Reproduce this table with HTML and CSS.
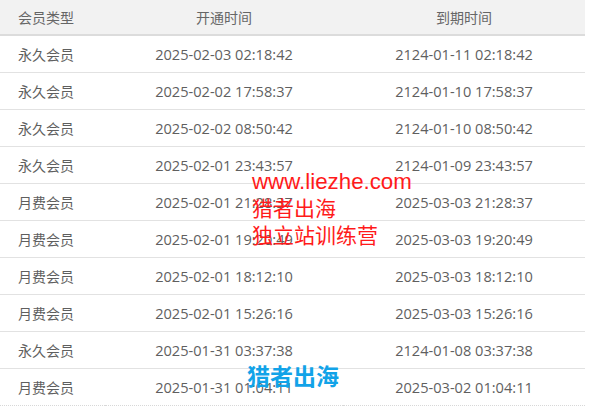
FILE: index.html
```html
<!DOCTYPE html>
<html>
<head>
  <meta charset="utf-8">
  <title>会员记录</title>
  <link rel="stylesheet" href="styles.css">
</head>

<body>
  <div class="wrap">
    <table class="vip-table">
      <colgroup>
        <col class="col-type">
        <col class="col-start">
        <col class="col-end">
      </colgroup>
      <thead>
        <tr>
          <th class="left">会员类型</th>
          <th>开通时间</th>
          <th>到期时间</th>
        </tr>
      </thead>
      <tbody>
        <tr><td class="left">永久会员</td><td>2025-02-03 02:18:42</td><td>2124-01-11 02:18:42</td></tr>
        <tr><td class="left">永久会员</td><td>2025-02-02 17:58:37</td><td>2124-01-10 17:58:37</td></tr>
        <tr><td class="left">永久会员</td><td>2025-02-02 08:50:42</td><td>2124-01-10 08:50:42</td></tr>
        <tr><td class="left">永久会员</td><td>2025-02-01 23:43:57</td><td>2124-01-09 23:43:57</td></tr>
        <tr><td class="left">月费会员</td><td>2025-02-01 21:28:37</td><td>2025-03-03 21:28:37</td></tr>
        <tr><td class="left">月费会员</td><td>2025-02-01 19:20:49</td><td>2025-03-03 19:20:49</td></tr>
        <tr><td class="left">月费会员</td><td>2025-02-01 18:12:10</td><td>2025-03-03 18:12:10</td></tr>
        <tr><td class="left">月费会员</td><td>2025-02-01 15:26:16</td><td>2025-03-03 15:26:16</td></tr>
        <tr><td class="left">永久会员</td><td>2025-01-31 03:37:38</td><td>2124-01-08 03:37:38</td></tr>
        <tr class="last"><td class="left">月费会员</td><td>2025-01-31 01:04:11</td><td>2025-03-02 01:04:11</td></tr>
      </tbody>
    </table>

    <!-- watermarks -->
    <div class="mark-red">
      <div class="mark-url">www.liezhe.com</div>
      <div>猎者出海</div>
      <div>独立站训练营</div>
    </div>
    <div class="mark-blue">猎者出海</div>
  </div>
</body>
</html>
```

FILE: styles.css
```css
body {
  margin: 0;
  background-color: #fff;
  font-family: "Open Sans", "Noto Sans CJK SC", sans-serif;
  color: #666;
}

.wrap {
  position: relative;
  width: 585px;
}

.vip-table {
  width: 585px;
  border-collapse: collapse;
  table-layout: fixed;
  font-size: 14.6px;
}

.col-type {
  width: 105px;
}

.col-start {
  width: 238px;
}

.col-end {
  width: 242px;
}

.vip-table th {
  height: 34px;
  padding: 0;
  background-color: #f2f2f2;
  border-bottom: 2px solid #dcdcdc;
  font-size: 14px;
  font-weight: normal;
  text-align: center;
  color: #666;
}

.vip-table td {
  height: 36px;
  padding: 0;
  border-bottom: 1px solid #e2e2e2;
  text-align: center;
  color: #5f5f5f;
}

.vip-table .left {
  text-align: left;
  padding-left: 18px;
  font-size: 14px;
}

.vip-table tr.last td {
  border-bottom: 1px dotted #d8d8d8;
}

.mark-red {
  position: absolute;
  left: 252px;
  top: 168px;
  color: #ff1a1a;
  font-family: "Liberation Sans", "Noto Sans CJK SC", sans-serif;
  font-size: 21px;
  line-height: 27px;
}

.mark-url {
  font-size: 22.3px;
}

.mark-blue {
  position: absolute;
  left: 247px;
  top: 361px;
  color: #12a3e8;
  font-family: "Noto Sans CJK SC", sans-serif;
  font-weight: bold;
  font-size: 23px;
  line-height: 28px;
}
```
